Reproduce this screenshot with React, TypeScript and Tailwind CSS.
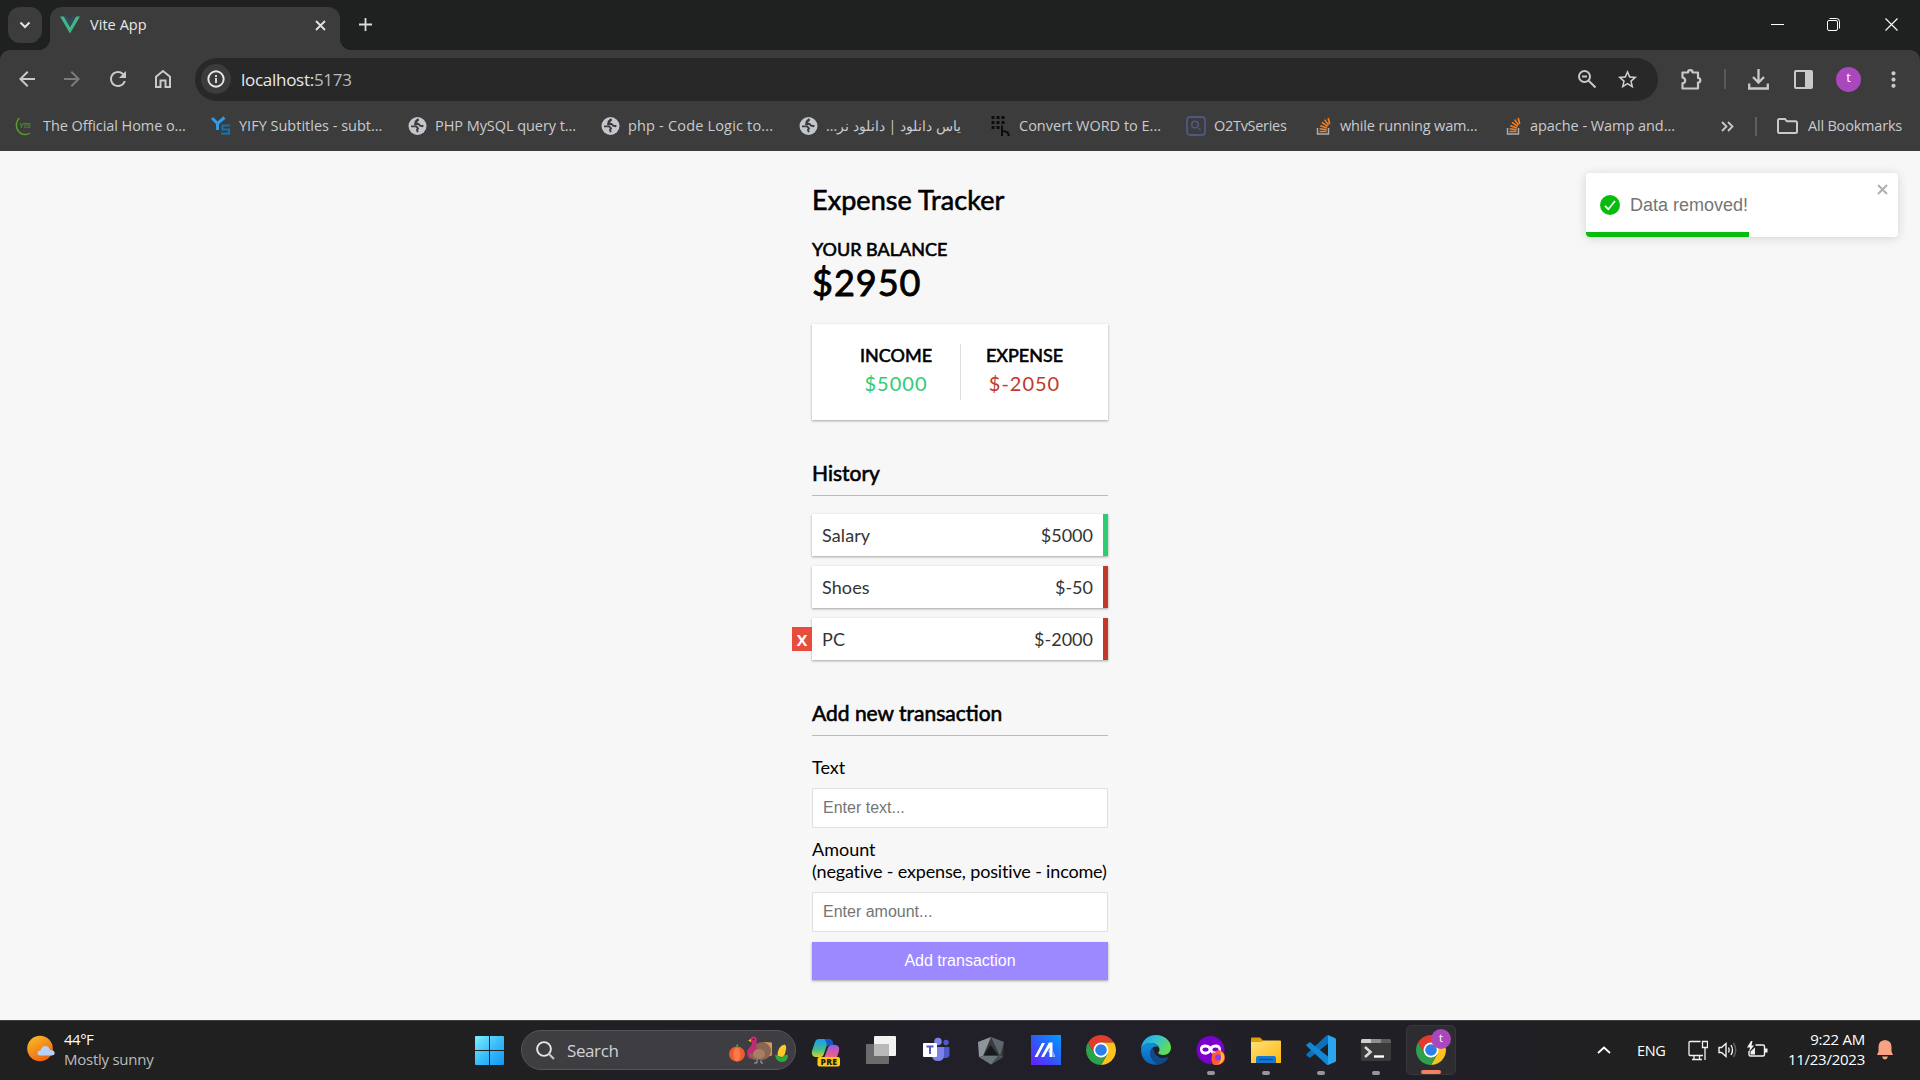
import React from "react";
import { MdArrowBack, MdArrowForward, MdRefresh, MdStarBorder, MdMoreVert } from "react-icons/md";

const ui = "font-['Open_Sans','Noto_Sans',sans-serif]";

function VueLogo() {
  return (
    <svg width="20" height="18" viewBox="0 0 20 18">
      <path d="M0 .5h4L10 11 16 .5h4L10 17.5z" fill="#41b883" />
      <path d="M4 .5h3.6L10 4.6 12.4.5H16L10 11z" fill="#35495e" />
    </svg>
  );
}

function GlobeIcon() {
  return (
    <svg width="20" height="20" viewBox="0 0 20 20">
      <circle cx="10.500" cy="10" r="9" fill="#c3c6cc" />
      <path d="M11.500 3.200L8.600 5.400 8.300 8h3.200l1.600 1.600 2.400.6.600-.9M4 10.400h5.200l1.800 2-1 1.500.8 2.300" fill="none" stroke="#3c3c3c" strokeWidth="1.900" />
      <path d="M11.500 3.200q-1.600 1-2.200 2.600L9 8l-1.500.3" fill="none" stroke="#3c3c3c" strokeWidth="2.200" />
    </svg>
  );
}

function StackIcon() {
  return (
    <svg width="20" height="20" viewBox="0 0 20 20">
      <path d="M5.500 12v6h11v-6" fill="none" stroke="#a9adb0" strokeWidth="1.500" />
      <path d="M7.500 15.500h7M7.600 12.800l7 1M8.300 9.700l6.700 2.200M10 6.400l5.700 3.900M12.600 3.600l4 5.500M16.200 2l1.500 6" stroke="#f48024" strokeWidth="1.600" />
    </svg>
  );
}

function YtsIcon() {
  return (
    <svg width="20" height="20" viewBox="0 0 20 20">
      <path d="M4.500 2C0 6 .5 14 6 17.500c3 1.800 7 1 9-.5" fill="none" stroke="#5a9a2a" strokeWidth="1.500" />
      <text x="4" y="11.500" fontSize="7.500" fontStyle="italic" fontWeight="700" fontFamily="Liberation Sans" fill="#4a8a26" textLength="12">YTS</text>
    </svg>
  );
}

function YifyIcon() {
  return (
    <svg width="20" height="20" viewBox="0 0 20 20">
      <path d="M1 2l5.500 5.500L13.500 1.500M6.500 7.500V14" fill="none" stroke="#2d9be8" strokeWidth="3" />
      <path d="M19 9.500h-7.500v4H18v4.200h-8" fill="none" stroke="#196fa8" strokeWidth="2.200" />
    </svg>
  );
}

function ConvertIcon() {
  return (
    <svg width="20" height="20" viewBox="0 0 20 20" fill="#0c0c0c">
      {[1, 6, 11].map((y) => [1, 6, 11].map((x) => (x === 11 && y === 11 ? null : <rect key={x + "-" + y} x={x - 0.500} y={y - 1} width="3" height="3" />)))}
      <path d="M10 9.500h2v4.500l5.500 1.500 1.500 4.500h-2.200l-1-3L12 16v4h-2z" />
    </svg>
  );
}

function O2Icon() {
  return (
    <svg width="20" height="20" viewBox="0 0 20 20" fill="none" stroke="#505783">
      <rect x="1" y="1" width="18" height="18" rx="3" strokeWidth="1.800" />
      <circle cx="9" cy="8.500" r="3.300" strokeWidth="1.600" />
      <path d="M12.500 12.500h1.500v2" strokeWidth="1" />
    </svg>
  );
}

const bookmarks: { icon: () => React.ReactElement; label: string; w: string; t: string; rtl?: boolean }[] = [
  { icon: YtsIcon, label: "The Official Home o...", w: "w-[196px]", t: "tracking-[-0.08px]" },
  { icon: YifyIcon, label: "YIFY Subtitles - subt...", w: "w-[196px]", t: "tracking-normal" },
  { icon: GlobeIcon, label: "PHP MySQL query t...", w: "w-[193px]", t: "tracking-[-0.06px]" },
  { icon: GlobeIcon, label: "php - Code Logic to...", w: "w-[198px]", t: "tracking-[0.18px]" },
  { icon: GlobeIcon, label: "یاس دانلود | دانلود نر...", w: "w-[193px]", t: "text-[14.2px]", rtl: true },
  { icon: ConvertIcon, label: "Convert WORD to E...", w: "w-[195px]", t: "tracking-normal" },
  { icon: O2Icon, label: "O2TvSeries", w: "w-[126px]", t: "tracking-[-0.3px]" },
  { icon: StackIcon, label: "while running wam...", w: "w-[190px]", t: "tracking-[-0.15px]" },
  { icon: StackIcon, label: "apache - Wamp and...", w: "w-[190px]", t: "tracking-[-0.05px]" },
];

function TabStrip() {
  return (
    <div className="flex h-[50px] bg-[#1f2120] pl-2">
      <div className="mt-[7px] flex h-9 w-[34px] items-center justify-center rounded-xl bg-[#3c3c3c]">
        <svg width="12" height="8" viewBox="0 0 12 8"><path d="M1.500 1.500L6 6l4.500-4.500" fill="none" stroke="#e3e3e3" strokeWidth="2" /></svg>
      </div>
      <div className="relative ml-2 mt-[7px] flex h-[43px] w-[290px] items-center rounded-t-xl bg-[#3c3c3c] pl-[10px] pr-[14px]">
        <span className="absolute bottom-0 -left-3 size-3 bg-[radial-gradient(circle_at_0_0,#1f2120_12px,#3c3c3c_12.500px)]" />
        <span className="absolute bottom-0 -right-3 size-3 bg-[radial-gradient(circle_at_100%_0,#1f2120_12px,#3c3c3c_12.500px)]" />
        <span className="mb-[7px]"><VueLogo /></span>
        <span className="mb-[7px] ml-[10px] grow text-[14.500px] tracking-[0.05px] text-[#e8e8e8]">Vite App</span>
        <svg className="mb-[7px]" width="11" height="11" viewBox="0 0 11 11"><path d="M1 1l9 9M10 1l-9 9" stroke="#e3e3e3" strokeWidth="1.800" /></svg>
      </div>
      <svg className="ml-[19px] mt-[18px]" width="13" height="13" viewBox="0 0 13 13"><path d="M6.500 0v13M0 6.500h13" stroke="#dcdcdc" strokeWidth="1.800" /></svg>
      <div className="ml-auto flex pr-[22px] pt-[18px]">
        <svg className="mr-[43px]" width="13" height="13" viewBox="0 0 13 13"><path d="M0 6.500h13" stroke="#fff" /></svg>
        <svg className="mr-[45px]" width="13" height="13" viewBox="0 0 13 13" fill="none" stroke="#fff"><rect x=".5" y="2.500" width="10" height="10" rx="1.500" /><path d="M2.500.5h7a3 3 0 013 3v7" /></svg>
        <svg width="13" height="13" viewBox="0 0 13 13"><path d="M.5.5l12 12M12.500.5l-12 12" stroke="#fff" strokeWidth="1.100" /></svg>
      </div>
    </div>
  );
}

function Toolbar() {
  return (
    <div className="bg-[#1f2120]">
      <div className="flex h-[58px] items-center rounded-t-[10px] bg-[#3c3c3c] pl-[15px]">
        <MdArrowBack className="size-6 text-[#c9c9c9]" />
        <MdArrowForward className="ml-[21px] size-6 text-[#7c7c7c]" />
        <MdRefresh className="ml-[22px] size-6 text-[#c9c9c9]" />
        <svg className="ml-[23px]" width="20" height="20" viewBox="0 0 20 20" fill="none" stroke="#c9c9c9" strokeWidth="2"><path d="M3 7.700L10 2l7 5.700V18h-4.500v-6.500h-5V18H3z" /></svg>
        <div className="ml-[22px] flex h-[43px] w-[1463px] items-center rounded-full bg-[#282828] pl-[6px] pr-[19px]">
          <div className="flex size-[30px] items-center justify-center rounded-full bg-[#3c3c3c]">
            <svg width="18" height="18" viewBox="0 0 18 18"><circle cx="9" cy="9" r="7.700" fill="none" stroke="#e8e8e8" strokeWidth="1.900" /><path d="M9 8v5M9 5v1.900" stroke="#e8e8e8" strokeWidth="1.800" /></svg>
          </div>
          <span className="ml-[10px] grow pt-[1px] text-[17px] tracking-[-0.280px] text-[#e8e8e8]">localhost:<span className="text-[#b8bbc0]">5173</span></span>
          <svg className="mr-[19px]" width="20" height="20" viewBox="0 0 20 20" fill="none" stroke="#c9c9c9" strokeWidth="2"><circle cx="7.500" cy="7.500" r="5.500" /><path d="M11.700 11.700l6.800 6.800M5 7.500h5" /></svg>
          <MdStarBorder className="size-[23px] text-[#d0d0d0]" />
        </div>
        <svg className="ml-[22px]" width="23" height="23" viewBox="0 0 23 23" fill="none" stroke="#c9c9c9" strokeWidth="2.200" strokeLinejoin="round"><path d="M2.500 4.500H8a2.300 2.300 0 014.600 0H18v5.400a2.300 2.300 0 010 4.600V20.500H2.500v-5.200c3.600-.8 3.600-5 0-5.800z" /></svg>
        <span className="ml-[21px] h-5 w-[2px] bg-[#5a5a5a]" />
        <svg className="ml-[22px]" width="21" height="21" viewBox="0 0 21 21" fill="none" stroke="#c9c9c9" strokeWidth="2.300"><path d="M10.500 0v13M5 8l5.500 5.500L16 8M1.200 14.500v5h18.600v-5" /></svg>
        <svg className="ml-[25px]" width="19" height="19" viewBox="0 0 19 19"><rect x="1" y="1" width="17" height="17" rx="1" fill="none" stroke="#c9c9c9" strokeWidth="2" /><path d="M11 1h7v17h-7z" fill="#c9c9c9" /></svg>
        <span className="ml-[23px] flex size-[25px] items-center justify-center rounded-full bg-[#ab47bc] pb-[2px] text-[13px] text-white">t</span>
        <MdMoreVert className="ml-[20px] size-[25px] text-[#c9c9c9]" />
      </div>
    </div>
  );
}

function BookmarksBar() {
  return (
    <div className="flex h-[43px] items-center bg-[#3c3c3c] pb-[8px] pl-[15px] pt-[1px] text-[14.500px] text-[#c9cbce]">
      {bookmarks.map((b) => (
        <div key={b.label} className={"flex shrink-0 items-center gap-2 whitespace-nowrap " + b.w}>
          <b.icon />
          <span dir={b.rtl ? "rtl" : "ltr"} className={b.t}>{b.label}</span>
        </div>
      ))}
      <svg className="ml-[29px]" width="13" height="11" viewBox="0 0 13 11"><path d="M1 1l4.500 4.500L1 10M7 1l4.500 4.500L7 10" fill="none" stroke="#c9c9c9" strokeWidth="1.800" /></svg>
      <span className="ml-[21px] h-[19px] w-[2px] bg-[#5f5f5f]" />
      <svg className="ml-[20px]" width="21" height="16" viewBox="0 0 21 16"><path d="M1 2.500Q1 1 2.500 1H8l2 2.300h8.500Q20 3.300 20 4.800v8.700q0 1.500-1.500 1.500h-16Q1 15 1 13.500z" fill="none" stroke="#c9c9c9" strokeWidth="2" /></svg>
      <span className="ml-[10px] whitespace-nowrap tracking-[-0.200px]">All Bookmarks</span>
    </div>
  );
}

const shadow = "shadow-[0_1px_3px_rgba(0,0,0,0.12),0_1px_2px_rgba(0,0,0,0.24)]";
const heavy = "[-webkit-text-stroke:0.6px_black]";

const history = [
  { name: "Salary", amount: "$5000", border: "border-[#2ecc71]" },
  { name: "Shoes", amount: "$-50", border: "border-[#c0392b]" },
  { name: "PC", amount: "$-2000", border: "border-[#c0392b]", hovered: true },
];

function Toast() {
  return (
    <div className="absolute left-[1586px] top-[22px] flex h-16 w-[312px] items-start overflow-hidden rounded bg-white pl-[14px] pr-[10px] font-['Liberation_Sans',sans-serif] shadow-[0_1px_10px_rgba(0,0,0,0.1),0_2px_15px_rgba(0,0,0,0.05)]">
      <svg className="mt-[22px]" width="20" height="20" viewBox="0 0 20 20"><circle cx="10" cy="10" r="10" fill="#07bc0c" /><path d="M5 10.800l3.300 3.400L15 6" fill="none" stroke="#fff" strokeWidth="1.700" /></svg>
      <span className="ml-[10px] mt-[18px] grow text-[18px] leading-7 text-[#757575]">Data removed!</span>
      <svg className="mt-[11px]" width="11" height="11" viewBox="0 0 11 11"><path d="M1 1l9 9M10 1l-9 9" stroke="#b0b0b0" strokeWidth="2" /></svg>
      <div className="absolute bottom-0 left-0 h-[5px] w-[163px] bg-[#07bc0c]" />
    </div>
  );
}

function ExpenseTracker() {
  return (
    <main className="relative flex h-[869px] justify-center bg-[#f7f7f7] pt-[33px] font-['Lato',sans-serif] text-[18px] leading-[22px] text-black">
      <div className="w-[296px]">
        <h2 className={"text-[27px] leading-8 tracking-[0.06px] " + heavy}>Expense Tracker</h2>
        <h4 className={"mt-[22px] " + heavy}>YOUR BALANCE</h4>
        <h1 className="mt-[1px] text-[36px] leading-[43px] tracking-[1px] [-webkit-text-stroke:0.9px_black]">$2950</h1>
        <div className={"mt-5 flex h-24 bg-white p-5 text-center " + shadow}>
          <div className="w-[129px] shrink-0 border-r border-[#dedede]">
            <h4 className={heavy}>INCOME</h4>
            <p className="mt-[5px] text-[20px] leading-6 tracking-[1px] text-[#2ecc71]">$5000</p>
          </div>
          <div className="grow">
            <h4 className={heavy}>EXPENSE</h4>
            <p className="mt-[5px] text-[20px] leading-6 tracking-[1px] text-[#c0392b]">$-2050</p>
          </div>
        </div>
        <h3 className={"mt-10 border-b border-[#bbb] pb-[10px] text-[21px] leading-[25px] " + heavy}>History</h3>
        <ul className="mt-[18px] flex flex-col gap-[10px]">
          {history.map((h) => (
            <li key={h.name} className={"relative flex justify-between border-r-[5px] bg-white p-[10px] text-[#333] " + h.border + " " + shadow}>
              <span className="tracking-[0.1px]">{h.name}</span>
              <span>{h.amount}</span>
              {h.hovered && <button className="absolute -left-5 top-[9px] flex h-6 w-5 items-center justify-center bg-[#e74c3c] pb-[1px] font-['Open_Sans'] text-[20px] leading-5 font-semibold text-white">x</button>}
            </li>
          ))}
        </ul>
        <h3 className={"mt-10 border-b border-[#bbb] pb-[10px] text-[21px] leading-[25px] " + heavy}>Add new transaction</h3>
        <label className="mt-5 block">Text</label>
        <input className="mt-[10px] block h-10 w-full rounded-[2px] border border-[#dedede] bg-white px-[10px] font-['Liberation_Sans'] text-[16px] placeholder:text-[#757575]" placeholder="Enter text..." />
        <label className="mt-[10px] block whitespace-nowrap">Amount<br /><span className="tracking-[-0.16px]">(negative - expense, positive - income)</span></label>
        <input className="mt-[10px] block h-10 w-full rounded-[2px] border border-[#dedede] bg-white px-[10px] font-['Liberation_Sans'] text-[16px] placeholder:text-[#757575]" placeholder="Enter amount..." />
        <button className={"mt-[10px] block h-[38px] w-full bg-[#9c88ff] pb-[1px] font-['Liberation_Sans'] text-[16px] text-white " + shadow}>Add transaction</button>
      </div>
      <Toast />
    </main>
  );
}

function ChromeIcon() {
  return (
    <svg width="30" height="30" viewBox="0 0 48 48">
      <path d="M3.220 12A24 24 0 0144.780 12H24L13.600 30z" fill="#e33b2e" />
      <path d="M44.780 12A24 24 0 0124 48l10.400-18L24 12z" fill="#fcc31e" />
      <path d="M24 48A24 24 0 013.220 12L13.600 30h20.800z" fill="#2da14c" />
      <circle cx="24" cy="24" r="12" fill="#fff" />
      <circle cx="24" cy="24" r="9.300" fill="#2f7de9" />
    </svg>
  );
}

function CopilotIcon() {
  return (
    <svg className="mt-[5px]" width="30" height="28" viewBox="0 0 30 28">
      <defs>
        <linearGradient id="cp1" x1="0" y1="0" x2="0" y2="1"><stop stopColor="#1c9bf0" /><stop offset=".6" stopColor="#3fc08a" /><stop offset="1" stopColor="#e0d02c" /></linearGradient>
        <linearGradient id="cp2" x1="0" y1="0" x2="0" y2="1"><stop stopColor="#9b59e8" /><stop offset="1" stopColor="#f2607c" /></linearGradient>
      </defs>
      <path d="M8 0h10L12.500 16q-.8 2-3 2H4q-4-1-3-6L4 3q1-3 4-3z" fill="url(#cp1)" />
      <path d="M13 0h5q3 0 3.800 3l.9 3H19q-2.500.5-3 2Q15.500 1.500 13 0z" fill="#1658c5" />
      <path d="M20 6h5q4 1 3 6l-2 6H13.500l3.500-9.500q1-2.500 3-2.500z" fill="url(#cp2)" />
      <rect x="6.500" y="18" width="22.500" height="9.500" rx="2" fill="#ffc90e" />
      <text x="9.500" y="25.800" fontSize="8.500" fontWeight="800" fontFamily="Open Sans" fill="#1a1a1a" textLength="16.500">PRE</text>
    </svg>
  );
}

function TaskViewIcon() {
  return (
    <svg width="30" height="28" viewBox="0 0 30 28">
      <rect x="8" y="0" width="22" height="20" rx="1" fill="#f2f2f2" />
      <rect x="0" y="8" width="23" height="20" rx="1" fill="#6b6b6b" />
      <rect x="8" y="8" width="15" height="12" fill="#b9b9b9" />
    </svg>
  );
}

function TeamsIcon() {
  return (
    <svg width="28" height="26" viewBox="0 0 28 26">
      <circle cx="16" cy="4.500" r="3.800" fill="#7b83eb" />
      <circle cx="24" cy="5.500" r="2.700" fill="#5059c9" />
      <path d="M19 10h8.500v7q0 4-4 4H19z" fill="#5059c9" />
      <path d="M10 10h12v8q0 6-6 6t-6-6z" fill="#7b83eb" />
      <rect x="1" y="6" width="14" height="14" rx="1" fill="#fff" />
      <path d="M4.500 9.500h7M8 9.500V17" stroke="#5059c9" strokeWidth="2" />
    </svg>
  );
}

function HexIcon() {
  return (
    <svg width="28" height="29" viewBox="0 0 28 29">
      <path d="M14 1l13 5-1 15-12 7.500L2 21 1 6z" fill="#363b3f" />
      <path d="M14 1l13 5-4 14z" fill="#5d666c" />
      <path d="M14 1L1 6l1 15 4-1z" fill="#8b959b" />
      <path d="M2 21l12 7.500L26 21l-3-1-17 0z" fill="#6c757a" />
      <path d="M14 28.500L26 21l-5-1z" fill="#454c50" />
      <path d="M13.500 9l7.500 10-14 0z" fill="#17191b" />
    </svg>
  );
}

function ArmoryIcon() {
  return (
    <svg width="30" height="30" viewBox="0 0 30 30">
      <defs><linearGradient id="arm" x1="0" y1="1" x2="1" y2="0"><stop stopColor="#6a1cff" /><stop offset=".5" stopColor="#2d5cf8" /><stop offset="1" stopColor="#009cff" /></linearGradient></defs>
      <path d="M0 0h30v30H0z" fill="url(#arm)" />
      <path d="M3.500 22L11 8h3L6.500 22zM10 22l8-14.500h3.500V22h-3v-9.500L13 22z" fill="#fff" />
      <path d="M17 15.500h2V19zM22.500 16l1.500 6h-1.500z" fill="#cfd8ff" />
    </svg>
  );
}

function EdgeIcon() {
  return (
    <svg width="30" height="30" viewBox="0 0 30 30">
      <defs>
        <linearGradient id="ed1" x1="0" y1="0" x2="1" y2=".5"><stop stopColor="#1c9fe0" /><stop offset=".5" stopColor="#35c1d4" /><stop offset="1" stopColor="#62dd52" /></linearGradient>
        <linearGradient id="ed2" x1="0" y1="0" x2="0" y2="1"><stop stopColor="#1390dd" /><stop offset="1" stopColor="#0b60b8" /></linearGradient>
      </defs>
      <path d="M0 14C.5 6 6.500 0 15 0s15 6 15 12.500c0 4.500-3.300 7.500-7.500 7.500-3.500 0-5.500-1.300-5.200-2.300.3-.8 1.200-1.300 1.200-3.200C18.500 11 15 8 10 8 5 8 1.500 10.500 0 14z" fill="url(#ed1)" />
      <path d="M0 15c.5-4 4-7 9-7 4 0 7.500 1.800 8.800 4.500-1-.9-2.200-1.300-3.500-1-4.300.8-6 6-3.800 11 1.300 3 4.200 5.800 7.500 7C8.500 31.500 0 25 0 15z" fill="url(#ed2)" />
      <path d="M12 12.500c-3 2.500-3.800 6.500-1.800 10.500 1.500 3.200 4.500 6 8 6.400 4-.8 7.500-3.400 9.300-6.700.3-.6-.3-.9-.8-.6-6.200 2.900-13.700-.6-14.700-9.600z" fill="#114a8b" />
    </svg>
  );
}

function MaskIcon() {
  return (
    <svg width="30" height="30" viewBox="0 0 30 30">
      <circle cx="14.500" cy="15" r="14" fill="#7a00cc" />
      <path d="M14.500 11.500C12 8.500 4 8.500 4 14c0 7 8 7 10.500 3 2.500 4 10.500 4 10.500-3 0-5.500-8-5.500-10.500-2.500z" fill="#fff" />
      <ellipse cx="9.500" cy="14.500" rx="3" ry="2" fill="#7a00cc" />
      <ellipse cx="19.500" cy="14.500" rx="3" ry="2" fill="#7a00cc" />
      <path d="M16 20q0-2 1-3l2 1q1-3 4-3 6 2 6 7.500T22.500 30 15.500 24z" fill="#ff5a36" />
      <path d="M24 16q5 2 4 8-2 5-6 5 5-4 2-13z" fill="#ffbd2e" />
      <circle cx="22" cy="22.500" r="3" fill="#8a3ff0" />
    </svg>
  );
}

function FolderIcon() {
  return (
    <svg width="30" height="27" viewBox="0 0 30 27">
      <defs><linearGradient id="fo" x1="0" y1="0" x2="1" y2="1"><stop stopColor="#ffe07a" /><stop offset="1" stopColor="#fbb90f" /></linearGradient></defs>
      <path d="M0 1.500Q0 .5 1 .5h8L12.500 4v5H0z" fill="#e0a008" />
      <path d="M0 5h10l2.500-1.500H29q1 0 1 1V26H0z" fill="url(#fo)" />
      <path d="M5 26v-5q0-2 2-2h16q2 0 2 2v5z" fill="#1577cf" />
      <path d="M8 22.500h14" stroke="#0c4f98" strokeWidth="1.300" />
    </svg>
  );
}

function CodeIcon() {
  return (
    <svg width="30" height="30" viewBox="0 0 30 30">
      <path d="M22 0l7 3q1 .5 1 1.500v21q0 1-1 1.500l-7 3z" fill="#2aa5ee" />
      <path d="M22 0v8.500L4.500 22.500q-.7.500-1.300 0L.6 20.400q-.8-.7 0-1.400L20.500.6Q21.200 0 22 0z" fill="#0a72bd" />
      <path d="M22 30v-8.500L4.500 7.500q-.7-.5-1.300 0L.6 9.600q-.8.700 0 1.400l19.900 18.400q.7.600 1.500.6z" fill="#1487d2" />
    </svg>
  );
}

function TerminalIcon() {
  return (
    <svg width="30" height="22" viewBox="0 0 30 22">
      <rect width="30" height="22" rx="1.500" fill="#3a3a3a" />
      <path d="M0 4V1.500Q0 0 1.500 0H10v4z" fill="#cfcfcf" />
      <path d="M10 0h10v4H10z" fill="#8e8e8e" /><path d="M20 0h8.500Q30 0 30 1.500V4H20z" fill="#5e5e5e" />
      <path d="M4 8l5.500 5L4 18" fill="none" stroke="#d8d8d8" strokeWidth="2.600" />
      <path d="M13 17.500h10" stroke="#fff" strokeWidth="2.400" />
    </svg>
  );
}

function HolidayArt() {
  return (
    <svg width="60" height="28" viewBox="0 0 60 28">
      <ellipse cx="8" cy="18" rx="8" ry="7.500" fill="#ee5a30" />
      <ellipse cx="8" cy="18.500" rx="3.500" ry="7" fill="#fb7a4c" />
      <path d="M8 11.500q-.5-2 1-3" stroke="#4f9a3a" strokeWidth="1.800" fill="none" />
      <path d="M35 6l8 .5v13l-7 2z" fill="#d99a5e" />
      <ellipse cx="33" cy="15" rx="9" ry="9" fill="#8a6653" />
      <path d="M21 5q0-4.500 3.500-4.500T28 5l-1 6 2 3-4 8-4 1q-3-2-3-6t3-6q2-2 2-4z" fill="#bd2c74" />
      <path d="M20 17q6 3 10-3v10q-9 1-10-7z" fill="#8a6653" />
      <ellipse cx="30" cy="18" rx="6" ry="5" fill="#a87e66" />
      <path d="M22 3l-3 1.500 3 1.500z" fill="#f2b632" /><circle cx="24.500" cy="3.500" r=".8" fill="#222" />
      <path d="M28 24v3h-3M32 24v3h2" stroke="#a7a4b5" fill="none" />
      <path d="M48.500 20q0-10 7-11.500 4 1-1 13z" fill="#ffc928" />
      <path d="M46 19q4 0 6 3 3-4 7-3 0 7-6 7-6-.5-7-7z" fill="#2eaa3c" />
    </svg>
  );
}

const apps: { icon: () => React.ReactElement; running?: boolean }[] = [
  { icon: CopilotIcon },
  { icon: TaskViewIcon },
  { icon: TeamsIcon },
  { icon: HexIcon },
  { icon: ArmoryIcon },
  { icon: ChromeIcon },
  { icon: EdgeIcon },
  { icon: MaskIcon, running: true },
  { icon: FolderIcon, running: true },
  { icon: CodeIcon, running: true },
  { icon: TerminalIcon, running: true },
];

function Taskbar() {
  return (
    <div className="flex h-[60px] items-stretch border-t border-[#3d4041] bg-[linear-gradient(90deg,#202020,#202020_20%,#211f28_50%,#211f26_75%,#202020_85%)] text-white">
      <div className="flex w-[475px] items-center pb-[4px] pl-[27px]">
        <svg width="28" height="28" viewBox="0 0 28 28">
          <defs><linearGradient id="sun" x1="0" y1="0" x2=".6" y2="1"><stop stopColor="#f8c22c" /><stop offset="1" stopColor="#ee6510" /></linearGradient></defs>
          <circle cx="13" cy="13.500" r="12.800" fill="url(#sun)" />
          <path d="M13 20.500q-3-.5-2.500-3 .5-2 3-2 1-4.500 5-4.500 3.500.3 4.500 4 4.500 0 4.700 3-.2 2.500-3 2.500z" fill="#b9d0f6" />
        </svg>
        <div className="ml-[9px] text-[15px] leading-5">
          <div className="tracking-[-0.500px]">44°F</div>
          <div className="tracking-[-0.250px] text-[#bcbcbc]">Mostly sunny</div>
        </div>
      </div>
      <svg className="mt-[15px]" width="29" height="29" viewBox="0 0 29 29">
        <defs><linearGradient id="win" x1="0" y1="0" x2="1" y2="1"><stop stopColor="#7cf0ff" /><stop offset=".5" stopColor="#3bbdf8" /><stop offset="1" stopColor="#1096f5" /></linearGradient></defs>
        <path d="M0 1q0-1 1-1h13v14H0zM15 0h13q1 0 1 1v13H15zM0 15h14v14H1q-1 0-1-1zM15 15h14v13q0 1-1 1H15z" fill="url(#win)" />
      </svg>
      <div className="ml-[17px] mt-[9px] flex h-10 w-[275px] items-center rounded-full border border-[#55555a] bg-[#3e3d42] pl-[14px] pr-[6px]">
        <svg width="19" height="19" viewBox="0 0 19 19"><circle cx="8" cy="8" r="6.900" fill="none" stroke="#e6e6e6" strokeWidth="1.900" /><path d="M13 13l5 5" stroke="#c4c4c4" strokeWidth="2.200" /></svg>
        <span className="ml-[12px] grow pt-[1px] text-[17px] tracking-[-0.400px] text-[#d2d2d4]">Search</span>
        <HolidayArt />
      </div>
      <div className="ml-[2px] flex">
        {apps.map((a, i) => (
          <div key={i} className="relative flex w-[55px] items-center justify-center pb-[1px]">
            <a.icon />
            {a.running && <span className="absolute bottom-[5px] left-[24px] h-1 w-2 rounded-full bg-[#97979b]" />}
          </div>
        ))}
        <div className="relative ml-[3px] mt-1 flex h-[50px] w-[50px] items-center justify-center rounded-[5px] border border-[#38373c] bg-[#2d2c31]">
          <ChromeIcon />
          <span className="absolute right-[4px] top-[3px] flex size-5 items-center justify-center rounded-full bg-[#ab47bc] pb-[1px] text-[11px] text-white">t</span>
          <span className="absolute bottom-0 left-[14px] h-1 w-5 rounded-full bg-[#f4805f]" />
        </div>
      </div>
      <div className="ml-auto flex items-center pb-[1px] pr-[27px]">
        <svg width="14" height="8" viewBox="0 0 14 8"><path d="M1 7l6-5.500L13 7" fill="none" stroke="#fff" strokeWidth="1.800" /></svg>
        <span className="ml-[26px] w-[29px] pt-[1px] text-[14.500px] tracking-[-0.300px]">ENG</span>
        <svg className="ml-[22px]" width="20" height="21" viewBox="0 0 20 21" fill="none" stroke="#f2f2f2" strokeWidth="1.300"><path d="M12.500 1.500H2Q1 1.500 1 2.500v12q0 1 1 1h13M6 15.500V19M11.500 15.500V19M4 19.500h10M14.500 1.500h5v6h-5zM17 7.500V20" /></svg>
        <svg className="ml-[10px]" width="20" height="18" viewBox="0 0 20 18" fill="none" stroke="#f2f2f2" strokeWidth="1.400"><path d="M1 6.500h2.500L8 2.500v13l-4.500-4H1zM10.500 6.500q1.500 2.500 0 5M13 4q3 5 0 10" /><path d="M15.500 2q4.500 7 0 14" stroke="#626262" /></svg>
        <svg className="ml-[9px]" width="21" height="18" viewBox="0 0 21 18"><path d="M8.500 4H16q1.500 0 1.500 1.500v8q0 1.500-1.500 1.500H3.500Q2 15 2 13.500V10" fill="none" stroke="#f2f2f2" strokeWidth="1.400" /><path d="M18 7.500h2.500v4H18zM4 0L0 6.500h3L2 11l5-6.500H4.500L5.500 0zM3.500 13.500V10.500L8 6.500v7z" fill="#f2f2f2" /></svg>
        <div className="ml-[12px] w-[85px] whitespace-nowrap pb-[3px] text-right text-[15px] leading-5 tracking-[-0.250px]">
          <div>9:22 AM</div>
          <div>11/23/2023</div>
        </div>
        <svg className="ml-[12px]" width="16" height="20" viewBox="0 0 16 20"><path d="M8 0q6.500.5 6.500 7v4.500L16 15H0l1.500-3.500V7Q1.500.5 8 0zM5 16.500h6q-.8 3-3 3t-3-3z" fill="#f8a283" /></svg>
      </div>
    </div>
  );
}

export default function App() {
  return (
    <div className={"h-[1080px] w-[1920px] overflow-hidden " + ui}>
      <TabStrip />
      <Toolbar />
      <BookmarksBar />
      <ExpenseTracker />
      <Taskbar />
    </div>
  );
}
